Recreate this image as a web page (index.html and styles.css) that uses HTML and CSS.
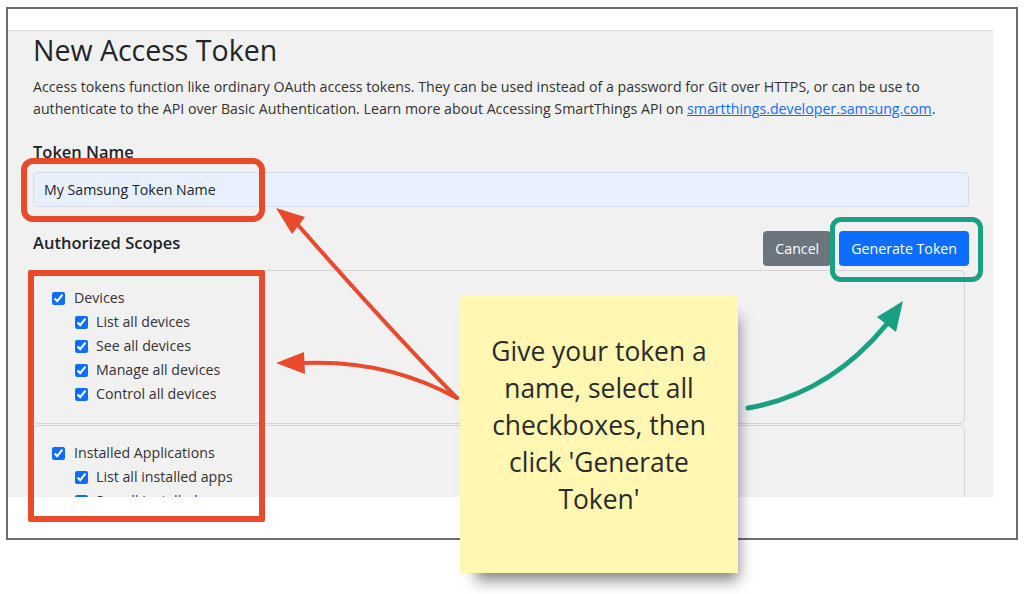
FILE: index.html
```html
<!DOCTYPE html>
<html lang="en">

<head>
    <meta charset="UTF-8">
    <meta name="viewport" content="width=device-width, initial-scale=1.0">
    <title>New Access Token</title>
    <link rel="stylesheet" href="styles.css">
</head>

<body>
    <div class="frame">
        <div class="shot">
            <h1 class="title">New Access Token</h1>
            <p class="intro">Access tokens function like ordinary OAuth access tokens. They can be used instead of a password for Git over HTTPS, or can be use to authenticate to the API over Basic Authentication. Learn more about Accessing SmartThings API on <a href="#">smartthings.developer.samsung.com</a>.</p>

            <label class="field-label" for="token-name">Token Name</label>
            <input class="field" id="token-name" type="text" value="My Samsung Token Name">

            <div class="scopes-head">
                <h2 class="section-label">Authorized Scopes</h2>
                <div class="actions">
                    <button class="btn btn-cancel">Cancel</button>
                    <button class="btn btn-primary">Generate Token</button>
                </div>
            </div>

            <div class="scope-card">
                <label class="check"><input type="checkbox" checked>Devices</label>
                <div class="sub">
                    <label class="check"><input type="checkbox" checked>List all devices</label>
                    <label class="check"><input type="checkbox" checked>See all devices</label>
                    <label class="check"><input type="checkbox" checked>Manage all devices</label>
                    <label class="check"><input type="checkbox" checked>Control all devices</label>
                </div>
            </div>
            <div class="scope-card">
                <label class="check"><input type="checkbox" checked>Installed Applications</label>
                <div class="sub">
                    <label class="check"><input type="checkbox" checked>List all installed apps</label>
                    <label class="check"><input type="checkbox" checked>See all installed apps</label>
                </div>
            </div>
        </div>
    </div>

    <!-- annotations -->
    <div class="mark mark-name"></div>
    <div class="mark mark-scopes"></div>
    <div class="mark mark-button"></div>

    <svg class="arrows" width="1024" height="594" viewBox="0 0 1024 594">
        <g fill="none" stroke="#e84a2b" stroke-width="4" stroke-linecap="round">
            <path d="M457 398 Q389 329 298 225" />
            <path d="M457 398 Q386 359 303 363" />
        </g>
        <g fill="#e84a2b">
            <polygon points="276,208 305,217 292,234" />
            <polygon points="276,363 304,352 305,374" />
        </g>
        <path d="M748 408 Q829 394 886 325" fill="none" stroke="#17a082" stroke-width="5" stroke-linecap="round" />
        <polygon points="903,301 877,317 896,332" fill="#17a082" />
    </svg>

    <div class="note">
        <p>Give your token a name, select all checkboxes, then click 'Generate Token'</p>
    </div>
</body>

</html>
```

FILE: styles.css
```css
* {
    box-sizing: border-box;
}

body {
    margin: 0;
    background: #fff;
    font-family: "Open Sans", "Noto Sans", sans-serif;
    color: #212529;
}

.frame {
    width: 1012px;
    height: 533px;
    margin: 7px 0 0 6px;
    padding-top: 21px;
    border: 2px solid #6d6d6d;
}

.shot {
    width: 985px;
    height: 467px;
    padding: 2px 24px 0 25px;
    overflow: hidden;
    background: #f1f1f1;
    border-top: 1px solid #dcdcdc;
}

.title {
    margin: 0;
    font-size: 28.5px;
    font-weight: 500;
    line-height: 1.2;
}

.intro {
    margin: 9px 0 0;
    font-size: 14.2px;
    line-height: 22px;
    color: #333;
}

.intro a {
    color: #0d6efd;
}

.field-label {
    display: block;
    margin-top: 20px;
    font-size: 16.5px;
    font-weight: 600;
    line-height: 24px;
}

.field {
    display: block;
    width: 100%;
    height: 35px;
    margin-top: 8px;
    padding: 0 10px;
    border: 1px solid #d6dce4;
    border-radius: 4px;
    background: #e8f0fe;
    font-family: inherit;
    font-size: 14.2px;
    color: #212529;
}

.scopes-head {
    display: flex;
    justify-content: space-between;
    align-items: flex-start;
    margin: 22px 0 4px;
}

.section-label {
    margin: 2px 0 0;
    font-size: 16.5px;
    font-weight: 600;
    line-height: 24px;
}

.actions {
    display: flex;
    gap: 8px;
    margin-top: 2px;
}

.btn {
    height: 35px;
    padding: 0 12px;
    border: 0;
    border-radius: 4px;
    font-family: inherit;
    font-size: 14.2px;
    color: #fff;
}

.btn-cancel {
    background: #6c757d;
}

.btn-primary {
    background: #0d6efd;
}

.scope-card {
    margin: 0 4px 1px 0;
    padding: 15px 18px 17px;
    border: 1px solid #d3d3d3;
    border-radius: 5px;
}

.check {
    display: flex;
    align-items: center;
    gap: 9px;
    font-size: 14.2px;
    line-height: 24px;
    color: #333;
}

.check input {
    width: 13px;
    height: 13px;
    margin: 0;
    accent-color: #0d6efd;
}

.sub {
    padding-left: 23px;
}

.sub .check {
    gap: 8px;
}

.mark {
    position: absolute;
    border-style: solid;
}

.mark-name {
    left: 21px;
    top: 158px;
    width: 244px;
    height: 64px;
    border-width: 6px;
    border-color: #e84a2b;
    border-radius: 12px;
}

.mark-scopes {
    left: 28px;
    top: 270px;
    width: 237px;
    height: 252px;
    border-width: 6px;
    border-color: #e84a2b;
    border-radius: 2px;
}

.mark-button {
    left: 830px;
    top: 217px;
    width: 153px;
    height: 65px;
    border-width: 5px;
    border-color: #17a082;
    border-radius: 11px;
}

.arrows {
    position: absolute;
    left: 0;
    top: 0;
}

.note {
    position: absolute;
    left: 460px;
    top: 295px;
    width: 278px;
    height: 278px;
    padding: 38px 18px 0;
    background: #fff7b2;
    box-shadow: 8px 15px 14px -8px rgba(0, 0, 0, 0.5);
}

.note p {
    margin: 0;
    font-size: 26.4px;
    line-height: 37px;
    text-align: center;
    color: #2b2b2b;
}
```
